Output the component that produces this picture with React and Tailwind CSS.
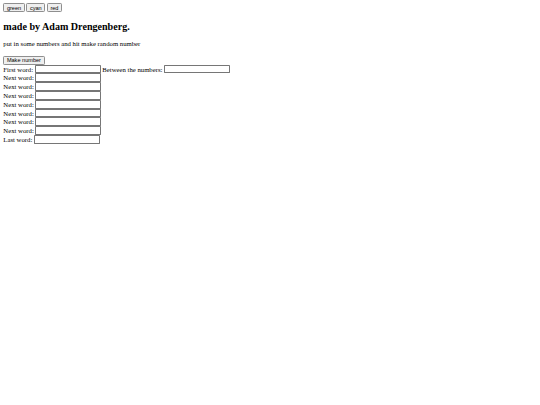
import React from 'react'

const COLOR_BUTTONS = ['green', 'cyan', 'red']
const MIDDLE_ROWS = 7

const btn =
  "inline-block align-baseline px-1.5 py-px border border-[#8f8f8f] rounded-[3px] bg-[#efefef] text-black text-[13.33px] leading-[normal] font-['Liberation_Sans',Arial,sans-serif]"
const field =
  'inline-block align-baseline w-[157px] h-[21px] px-0.5 border border-[#767676] rounded-[2px] bg-white'

function Field() {
  return <input type="text" className={field} />
}

export default function App() {
  return (
    <div className="min-h-screen bg-white">
      <div className="[zoom:0.42] p-2 text-base leading-[normal] text-black font-['Liberation_Serif','Times_New_Roman',serif]">
        <div>
          {COLOR_BUTTONS.map((c) => (
            <React.Fragment key={c}>
              <button className={btn}>{c}</button>{' '}
            </React.Fragment>
          ))}
        </div>

        <h2 className="mt-[20px] mb-[21px] text-2xl leading-[normal] font-bold">made by Adam Drengenberg.</h2>

        <p className="mb-5">put in some numbers and hit make random number</p>

        <div>
          <button className={btn}>Make number</button>
          <br />
          First word: <Field /> Between the numbers: <Field />
          <br />
          {Array.from({ length: MIDDLE_ROWS }).map((_, i) => (
            <React.Fragment key={i}>
              Next word: <Field />
              <br />
            </React.Fragment>
          ))}
          Last word: <Field />
        </div>
      </div>
    </div>
  )
}
